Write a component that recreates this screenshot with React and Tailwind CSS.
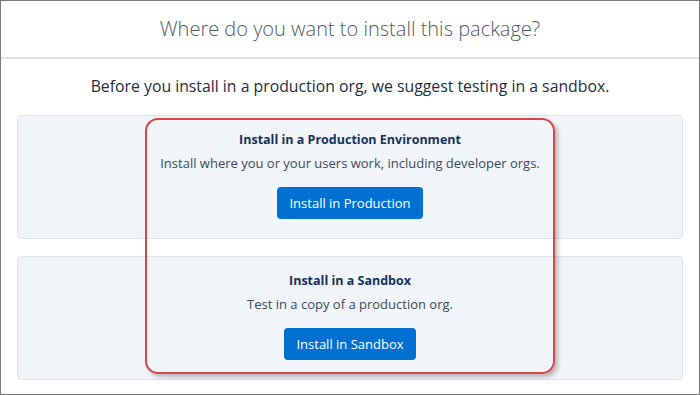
import React from "react";

const Option = ({ title, text, button }) => {
  return (
    <div className="h-[124px] rounded border border-[#dfe4ec] bg-[#f1f4f8] flex flex-col items-center pt-[15px]">
      <div className="text-[12.5px] font-bold text-[#16325c] leading-[18px]">{title}</div>
      <div className="text-[13px] text-[#3e4b5e] leading-[18px] mt-[5px]">{text}</div>
      <button className="mt-[15px] h-[32px] px-[12px] rounded bg-[#0070d2] text-white text-[13px] leading-[32px]">
        {button}
      </button>
    </div>
  );
};

const App = () => {
  return (
    <div
      className="relative w-[700px] h-[395px] bg-white border border-[#7a7a7a] overflow-hidden"
      style={{ fontFamily: '"Open Sans", "Noto Sans", sans-serif' }}
    >
      <div className="h-[58px] border-b-2 border-[#dde1e7] flex items-center justify-center">
        <h1 className="text-[20px] font-light text-[#54595f]">Where do you want to install this package?</h1>
      </div>
      <div className="h-[56px] flex items-center justify-center">
        <p className="text-[15.8px] text-[#1f2d45]">Before you install in a production org, we suggest testing in a sandbox.</p>
      </div>
      <div className="px-[16px] flex flex-col gap-[17px]">
        <Option
          title="Install in a Production Environment"
          text="Install where you or your users work, including developer orgs."
          button="Install in Production"
        />
        <Option
          title="Install in a Sandbox"
          text="Test in a copy of a production org."
          button="Install in Sandbox"
        />
      </div>
      <div className="absolute left-[144px] top-[117px] w-[410px] h-[256px] rounded-[13px] border-2 border-[#d9464a] shadow-[3px_3px_4px_rgba(0,0,0,0.25)] pointer-events-none" />
    </div>
  );
};

export default App;
